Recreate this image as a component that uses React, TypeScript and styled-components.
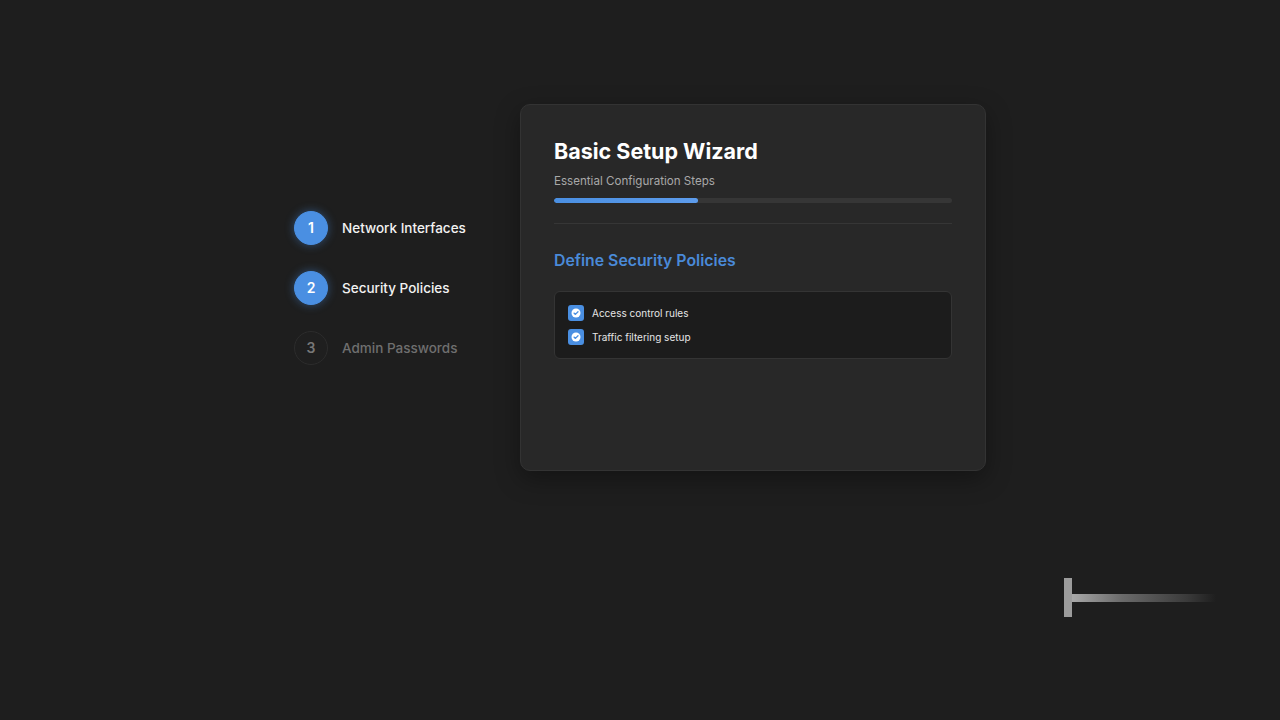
import React from "react";
import styled, { createGlobalStyle } from "styled-components";

const Global = createGlobalStyle`
  html, body { margin: 0; padding: 0; background: #1e1e1e; }
  body { font-family: Inter, "Noto Sans", sans-serif; color: #fff; }
  * { box-sizing: border-box; }
`;

const Page = styled.div`
  position: relative;
  width: 1280px;
  height: 720px;
  background: #1e1e1e;
  overflow: hidden;
  display: flex;
  justify-content: center;
  align-items: flex-start;
  padding-top: 104px;
`;

const Row = styled.div`
  display: flex;
  align-items: center;
`;

const Stepper = styled.div`
  width: 226px;
  display: flex;
  flex-direction: column;
  gap: 26px;
`;

const Step = styled.div`
  display: flex;
  align-items: center;
  gap: 14px;
`;

const Circle = styled.div<{ $active: boolean }>`
  width: 34px;
  height: 34px;
  border-radius: 50%;
  display: flex;
  align-items: center;
  justify-content: center;
  font-size: 14px;
  font-weight: 600;
  background: ${(p) => (p.$active ? "#4a8fe2" : "#1f1f1f")};
  color: ${(p) => (p.$active ? "#fff" : "#777")};
  border: 1px solid ${(p) => (p.$active ? "#4a8fe2" : "#2c2c2c")};
  box-shadow: ${(p) => (p.$active ? "0 0 10px rgba(74,143,226,0.45)" : "none")};
`;

const StepLabel = styled.span<{ $active: boolean }>`
  font-size: 13.5px;
  font-weight: 500;
  color: ${(p) => (p.$active ? "#f2f2f2" : "#6f6f6f")};
`;

const Card = styled.div`
  width: 466px;
  height: 367px;
  background: #282828;
  border: 1px solid #333;
  border-radius: 10px;
  padding: 33px 33px;
  box-shadow: 0 8px 24px rgba(0, 0, 0, 0.35);
  display: flex;
  flex-direction: column;
`;

const Title = styled.h1`
  margin: 0;
  font-size: 21.5px;
  line-height: 26px;
  font-weight: 700;
  color: #fff;
`;

const Subtitle = styled.div`
  margin-top: 8px;
  font-size: 11.6px;
  line-height: 18px;
  color: #a8a8a8;
`;

const Track = styled.div`
  margin-top: 8px;
  height: 5px;
  border-radius: 3px;
  background: #363636;
  overflow: hidden;
`;

const Fill = styled.div`
  height: 100%;
  border-radius: 3px;
  background: linear-gradient(90deg, #4a8fe2, #5d9cec);
`;

const Divider = styled.div`
  margin-top: 20px;
  height: 1px;
  background: #363636;
`;

const Heading = styled.h2`
  margin: 26px 0 0;
  font-size: 15.8px;
  line-height: 22px;
  font-weight: 600;
  color: #4a8ad8;
`;

const Checklist = styled.div`
  margin-top: 19px;
  background: #1c1c1c;
  border: 1px solid #343434;
  border-radius: 6px;
  padding: 12px 13px;
  display: flex;
  flex-direction: column;
  gap: 6px;
`;

const Item = styled.div`
  display: flex;
  align-items: center;
  gap: 8px;
  height: 18px;
  font-size: 10px;
  color: #e6e6e6;
`;

const Box = styled.div`
  width: 16px;
  height: 16px;
  border-radius: 3px;
  background: #4a8fe2;
  display: flex;
  align-items: center;
  justify-content: center;
`;

const Decor = styled.div`
  position: absolute;
  left: 1064px;
  top: 578px;
  display: flex;
  align-items: center;
`;

const DecorBar = styled.div`
  width: 8px;
  height: 39px;
  background: #9c9c9c;
`;

const DecorBeam = styled.div`
  width: 144px;
  height: 8px;
  background: linear-gradient(90deg, #a8a8a8 0%, #6a6a6a 35%, #3a3a3a 80%, rgba(40,40,40,0) 100%);
`;

const CheckIcon = () => (
  <svg width="10" height="10" viewBox="0 0 10 10">
    <circle cx="5" cy="5" r="4.5" fill="#fff" />
    <path d="M3 5.1 L4.4 6.4 L7 3.7" stroke="#4a8fe2" strokeWidth="1.3" fill="none" strokeLinecap="round" strokeLinejoin="round" />
  </svg>
);

const steps = [
  { n: 1, label: "Network Interfaces", active: true },
  { n: 2, label: "Security Policies", active: true },
  { n: 3, label: "Admin Passwords", active: false },
];

export default function App() {
  return (
    <>
      <Global />
      <Page>
        <Row>
          <Stepper>
            {steps.map((s) => (
              <Step key={s.n}>
                <Circle $active={s.active}>{s.n}</Circle>
                <StepLabel $active={s.active}>{s.label}</StepLabel>
              </Step>
            ))}
          </Stepper>
          <Card>
            <Title>Basic Setup Wizard</Title>
            <Subtitle>Essential Configuration Steps</Subtitle>
            <Track>
              <Fill style={{ width: "36.3%" }} />
            </Track>
            <Divider />
            <Heading>Define Security Policies</Heading>
            <Checklist>
              <Item>
                <Box><CheckIcon /></Box>
                Access control rules
              </Item>
              <Item>
                <Box><CheckIcon /></Box>
                Traffic filtering setup
              </Item>
            </Checklist>
          </Card>
        </Row>
        <Decor>
          <DecorBar />
          <DecorBeam />
        </Decor>
      </Page>
    </>
  );
}
